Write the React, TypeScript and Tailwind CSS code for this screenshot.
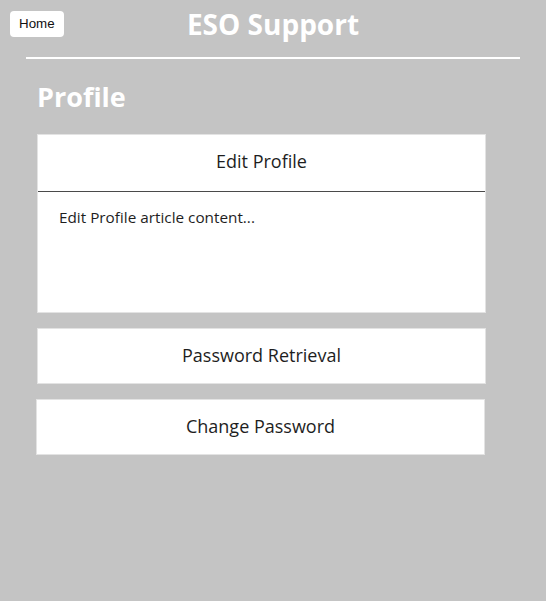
export default function App() {
  return (
    <div className="min-h-[601px] w-full bg-[#c4c4c4] font-['Open_Sans',sans-serif]">
      <header className="relative flex h-[43px] items-end justify-center">
        <button className="absolute left-[10px] top-[11px] rounded-[4px] bg-white px-[9px] py-[5px] font-['Liberation_Sans',Arial,sans-serif] text-[13.33px] leading-[16px] text-[#111]">
          Home
        </button>
        <h1 className="text-[28px] font-bold leading-[38px] text-white">ESO Support</h1>
      </header>
      <div className="mx-[26px] mt-[14px] h-[2px] bg-white" />
      <main className="pl-[37px] pt-[19px]">
        <h2 className="text-[27px] font-bold leading-[38px] text-white">Profile</h2>
        <div className="mt-[18px] flex w-[449px] flex-col gap-[15px]">
          <section className="border border-[#e3e3e3] bg-white">
            <div className="flex h-[56px] items-center justify-center pb-[3px] text-[18px] text-[#1e1e1e]">Edit Profile</div>
            <div className="h-[121px] border-t border-[#4a4a4a] px-[21px] pt-[15px] text-[15.3px] leading-[20px] text-[#1e1e1e]">
              Edit Profile article content...
            </div>
          </section>
          <div className="flex h-[56px] items-center justify-center border border-[#e3e3e3] bg-white pb-[2px] text-[18px] text-[#1e1e1e]">
            Password Retrieval
          </div>
          <div className="-ml-px flex h-[56px] w-[449px] items-center justify-center self-start border border-[#e3e3e3] bg-white pb-[2px] text-[18px] text-[#1e1e1e]">
            Change Password
          </div>
        </div>
      </main>
    </div>
  );
}
